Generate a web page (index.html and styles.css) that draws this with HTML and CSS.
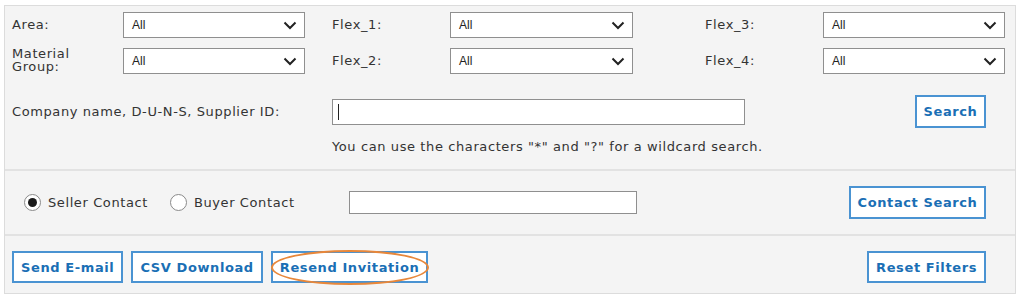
FILE: index.html
```html
<!DOCTYPE html>
<html>
<head>
    <title>Supplier Search</title>
    <link rel="stylesheet" href="styles.css">
</head>
<body>
    <div class="panel">
        <div class="section search-section">
            <div class="filters">
                <div class="label">Area:</div>
                <div class="select"><span>All</span><svg width="14" height="9" viewBox="0 0 14 9"><path d="M1.5 1.5 L7 7 L12.5 1.5" fill="none" stroke="#222" stroke-width="2"/></svg></div>
                <div class="label gap-s">Flex_1:</div>
                <div class="select"><span>All</span><svg width="14" height="9" viewBox="0 0 14 9"><path d="M1.5 1.5 L7 7 L12.5 1.5" fill="none" stroke="#222" stroke-width="2"/></svg></div>
                <div class="label gap-l">Flex_3:</div>
                <div class="select"><span>All</span><svg width="14" height="9" viewBox="0 0 14 9"><path d="M1.5 1.5 L7 7 L12.5 1.5" fill="none" stroke="#222" stroke-width="2"/></svg></div>

                <div class="label two-line">Material<br>Group:</div>
                <div class="select"><span>All</span><svg width="14" height="9" viewBox="0 0 14 9"><path d="M1.5 1.5 L7 7 L12.5 1.5" fill="none" stroke="#222" stroke-width="2"/></svg></div>
                <div class="label gap-s">Flex_2:</div>
                <div class="select"><span>All</span><svg width="14" height="9" viewBox="0 0 14 9"><path d="M1.5 1.5 L7 7 L12.5 1.5" fill="none" stroke="#222" stroke-width="2"/></svg></div>
                <div class="label gap-l">Flex_4:</div>
                <div class="select"><span>All</span><svg width="14" height="9" viewBox="0 0 14 9"><path d="M1.5 1.5 L7 7 L12.5 1.5" fill="none" stroke="#222" stroke-width="2"/></svg></div>
            </div>

            <div class="search-row">
                <div class="label company-label">Company name, D-U-N-S, Supplier ID:</div>
                <div class="text-input company-input"><span class="caret"></span></div>
                <button class="btn search-btn">Search</button>
            </div>
            <p class="hint">You can use the characters "*" and "?" for a wildcard search.</p>
        </div>

        <div class="section contact-section">
            <label class="radio checked"><span class="dot"></span>Seller Contact</label>
            <label class="radio"><span class="dot"></span>Buyer Contact</label>
            <div class="text-input contact-input"></div>
            <button class="btn contact-btn">Contact Search</button>
        </div>

        <div class="section actions-section">
            <button class="btn">Send E-mail</button>
            <button class="btn">CSV Download</button>
            <button class="btn resend-btn">Resend Invitation<span class="highlight"></span></button>
            <button class="btn reset-btn">Reset Filters</button>
        </div>
    </div>
</body>
</html>
```

FILE: styles.css
```css
body {
    margin: 0;
    background-color: #fff;
    font-family: 'DejaVu Sans', Verdana, sans-serif;
    font-size: 13px;
    letter-spacing: 0.6px;
    color: #333;
}
.panel {
    width: 1010px;
    margin: 5px 0 0 4px;
    border: 1px solid #dcdcdc;
    background-color: #f4f4f4;
}
.section {
    box-sizing: border-box;
    padding: 0 29px 0 7px;
}
.search-section {
    height: 163px;
    padding-top: 6px;
}
.filters {
    display: grid;
    grid-template-columns: 111px 182px 145px 183px 190px 182px;
    grid-auto-rows: 26px;
    row-gap: 10px;
    align-items: center;
}
.label {
    line-height: 14px;
}
.gap-s {
    padding-left: 27px;
}
.gap-l {
    padding-left: 72px;
}
.two-line {
    line-height: 13px;
    margin-top: -2px;
}
.select {
    box-sizing: border-box;
    height: 26px;
    border: 1px solid #8f8f8f;
    background-color: #fff;
    display: flex;
    align-items: center;
    justify-content: space-between;
    padding: 0 7px 0 8px;
    font-family: 'Liberation Sans', Arial, sans-serif;
    font-size: 12px;
    letter-spacing: 0;
    color: #222;
}
.search-row {
    display: flex;
    align-items: center;
    margin-top: 21px;
    height: 33px;
}
.company-label {
    width: 320px;
}
.text-input {
    box-sizing: border-box;
    height: 26px;
    border: 1px solid #8f8f8f;
    background-color: #fff;
}
.company-input {
    width: 413px;
    display: flex;
    align-items: center;
    padding-left: 5px;
}
.caret {
    width: 1px;
    height: 16px;
    background-color: #222;
}
.btn {
    box-sizing: border-box;
    height: 33px;
    border: 2px solid #4a93d2;
    background-color: #fff;
    color: #1a6fb5;
    font-family: 'DejaVu Sans', Verdana, sans-serif;
    font-size: 13px;
    letter-spacing: 0.6px;
    font-weight: bold;
    white-space: nowrap;
    padding: 0 7px;
    cursor: pointer;
}
.search-btn {
    margin-left: auto;
    width: 71px;
    padding: 0;
}
.hint {
    margin: 11px 0 0 320px;
    line-height: 16px;
}
.contact-section {
    height: 65px;
    border-top: 2px solid #e2e2e2;
    display: flex;
    align-items: center;
    padding-left: 19px;
}
.radio {
    display: flex;
    align-items: center;
    margin-right: 22px;
}
.dot {
    box-sizing: border-box;
    width: 17px;
    height: 17px;
    border: 1px solid #8a8a8a;
    border-radius: 50%;
    background-color: #fff;
    margin-right: 7px;
    display: flex;
    align-items: center;
    justify-content: center;
}
.checked .dot::after {
    content: '';
    width: 9px;
    height: 9px;
    border-radius: 50%;
    background-color: #1a1a1a;
}
.contact-input {
    width: 288px;
    height: 23px;
    margin-left: 32px;
}
.contact-btn {
    margin-left: auto;
    width: 137px;
    padding: 0;
}
.actions-section {
    height: 59px;
    border-top: 2px solid #e2e2e2;
    display: flex;
    align-items: center;
    gap: 8px;
    padding-top: 5px;
}
.actions-section .btn {
    height: 32px;
}
.resend-btn {
    position: relative;
}
.highlight {
    position: absolute;
    left: -2px;
    top: -3px;
    right: -3px;
    bottom: -4px;
    border: 2px solid #e8873a;
    border-radius: 50%;
}
.reset-btn {
    margin-left: auto;
}
```
